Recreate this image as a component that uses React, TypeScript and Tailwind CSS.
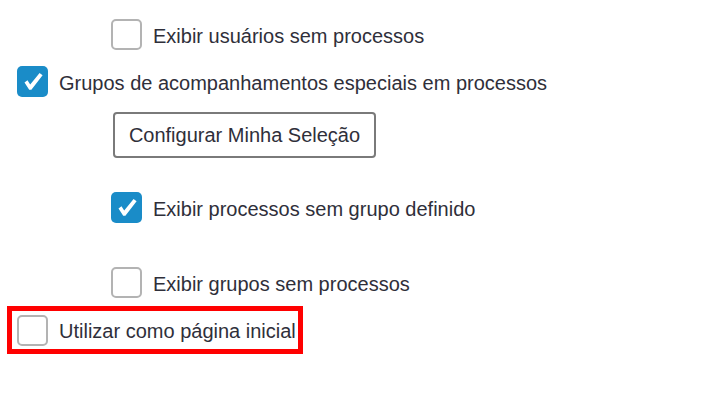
const Box = ({ checked = false }: { checked?: boolean }) =>
  checked ? (
    <span className="block h-[31px] w-[31px] shrink-0 rounded-[5px] bg-[#1a8cc8]">
      <svg viewBox="0 0 31 31" className="h-full w-full">
        <path d="M7.5 16.5 L10.5 14.2 L13.2 18.6 L22.6 7 L25.6 9.2 L14.4 23.8 L12.2 23.8 Z" fill="#fff" strokeLinejoin="round" />
      </svg>
    </span>
  ) : (
    <span className="block h-[31px] w-[31px] shrink-0 rounded-[5px] border-2 border-[#b3b3b3] bg-white" />
  );

const Row = ({ label, checked, className = "" }: { label: string; checked?: boolean; className?: string }) => (
  <label className={`flex items-center gap-[11px] ${className}`}>
    <Box checked={checked} />
    <span className="pt-[2px] text-[20px] leading-none text-[#2f2f3a]">{label}</span>
  </label>
);

export default function App() {
  return (
    <div
      className="h-[411px] w-[708px] bg-white pl-[17px] pt-[19px]"
      style={{ fontFamily: '"Liberation Sans", Arial, sans-serif' }}
    >
      <Row className="ml-[94px]" label="Exibir usuários sem processos" />
      <Row className="mt-[16px]" checked label="Grupos de acompanhamentos especiais em processos" />
      <button className="ml-[96px] mt-[15px] h-[46px] w-[263px] rounded-[4px] border-2 border-[#7a7a7a] bg-white text-[20px] text-[#2f2f3a]">
        Configurar Minha Seleção
      </button>
      <Row className="ml-[94px] mt-[34px]" checked label="Exibir processos sem grupo definido" />
      <Row className="ml-[94px] mt-[44px]" label="Exibir grupos sem processos" />
      <div className="-ml-[10px] mt-[8px] flex h-[48px] w-[296px] items-center border-[5px] border-[#ff0000] pl-[5px]">
        <Row label="Utilizar como página inicial" />
      </div>
    </div>
  );
}
